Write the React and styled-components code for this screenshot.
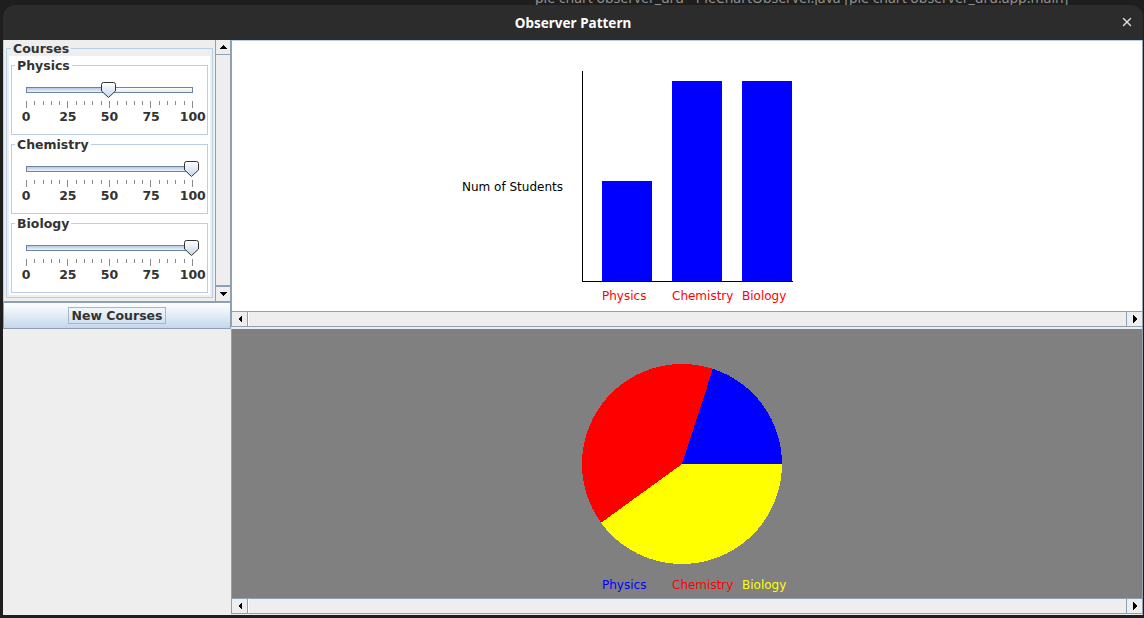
import React from 'react';
import styled, { createGlobalStyle } from 'styled-components';
import { X } from 'lucide-react';

const GlobalStyle = createGlobalStyle`
  html, body {
    margin: 0;
    padding: 0;
    width: 1144px;
    height: 618px;
    overflow: hidden;
    background: #1e1e1e;
  }
`;

const courses = [
  { name: 'Physics', value: 50 },
  { name: 'Chemistry', value: 100 },
  { name: 'Biology', value: 100 },
];

const Screen = styled.div`
  display: flex;
  flex-direction: column;
  width: 1144px;
  height: 618px;
`;

const DesktopStrip = styled.div`
  height: 5px;
  overflow: hidden;
  padding-left: 535px;
  font-family: 'Noto Sans', sans-serif;
  font-size: 14px;
  line-height: 14px;
  color: #8f8f8f;
  white-space: nowrap;
`;

const StripText = styled.div`
  margin-top: -9px;
`;

const Window = styled.div`
  margin-left: 3px;
  width: 1140px;
  height: 610px;
  display: flex;
  flex-direction: column;
  border-radius: 12px 12px 0 0;
  overflow: hidden;
`;

const TitleBar = styled.div`
  height: 35px;
  flex: none;
  background: #2c2c2c;
  display: flex;
  align-items: center;
  justify-content: center;
  position: relative;
  font-family: 'Noto Sans', sans-serif;
  font-weight: 700;
  font-size: 13.5px;
  color: #ffffff;
`;

const CloseButton = styled.div`
  position: absolute;
  right: 9px;
  top: 10px;
  display: flex;
  color: #dddddd;
`;

const Body = styled.div`
  flex: 1;
  display: flex;
  background: #eeeeee;
  font-family: 'DejaVu Sans', 'Liberation Sans', sans-serif;
`;

const LeftPane = styled.div`
  width: 228px;
  flex: none;
  display: flex;
  flex-direction: column;
`;

const CourseScroll = styled.div`
  height: 261px;
  display: flex;
  border-left: 1px solid #b8cfe5;
  border-bottom: 1px solid #8da0b4;
`;

const Viewport = styled.div`
  flex: 1;
  overflow: hidden;
  padding-top: 1px;
`;

const TitledBox = styled.fieldset`
  margin: 0 2px;
  padding: 0 2px 2px;
  border: 1px solid #b8cfe5;
  min-width: 0;
`;

const BoxTitle = styled.legend`
  margin-left: ${p => p.$indent}px;
  padding: 0 2px;
  font-weight: 700;
  font-size: 12.5px;
  line-height: 15px;
  color: #333333;
`;

const CourseList = styled.div`
  background: #ffffff;
  padding: 2px 2px 2px;
  display: flex;
  flex-direction: column;
  gap: 2px;
`;

const CourseBox = styled(TitledBox)`
  margin: 0;
  padding: 0 14px 10px;
`;

const SliderBody = styled.div`
  margin-top: 9px;
  height: 16px;
  position: relative;
  display: flex;
  align-items: center;
`;

const Track = styled.div`
  flex: 1;
  height: 6px;
  box-sizing: border-box;
  border: 1px solid #6e84a3;
  background: linear-gradient(#fbfcfd, #e3ebf3);
  display: flex;
`;

const TrackFill = styled.div`
  height: 100%;
  background: linear-gradient(#b5c9e2, #eef3f9);
`;

const Thumb = styled.svg`
  position: absolute;
  top: 0;
`;

const Ticks = styled.div`
  margin-top: 3px;
  height: 7px;
  display: flex;
  justify-content: space-between;
  align-items: flex-start;
`;

const Tick = styled.span`
  width: 1px;
  height: ${p => (p.$major ? 7 : 4)}px;
  background: #8a8a8a;
`;

const TickLabels = styled.div`
  margin: 2px -20.6px 0;
  display: grid;
  grid-template-columns: repeat(5, 1fr);
  font-weight: 700;
  font-size: 12.5px;
  line-height: 14px;
  color: #333333;
  text-align: center;
`;

const VScroll = styled.div`
  width: 16px;
  flex: none;
  box-sizing: border-box;
  display: flex;
  flex-direction: column;
  border-left: 1px solid #8da0b4;
  border-right: 1px solid #8da0b4;
  background: #eeeeee;
`;

const ArrowButton = styled.div`
  flex: none;
  width: ${p => (p.$vertical ? 'auto' : '16px')};
  height: ${p => (p.$vertical ? '15px' : 'auto')};
  display: flex;
  align-items: center;
  justify-content: center;
  background: #eeeeee;
  box-sizing: border-box;
  ${p => p.$side}: 1px solid #8da0b4;
`;

const VThumb = styled.div`
  flex: 1;
  border-bottom: 1px solid #8da0b4;
  background: #eeeeee;
`;

const NewCoursesButton = styled.button`
  height: 27px;
  flex: none;
  margin: 0;
  padding: 0;
  border: 1px solid #8da0b4;
  background: linear-gradient(#fdfeff, #e2ecf5 50%, #c4d7ea);
  display: flex;
  align-items: center;
  justify-content: center;
  font-family: 'DejaVu Sans', 'Liberation Sans', sans-serif;
  font-weight: 700;
  font-size: 12.5px;
  color: #333333;
`;

const FocusRing = styled.span`
  border: 1px solid #a3b8cc;
  padding: 0 2px;
  line-height: 15px;
`;

const RightPane = styled.div`
  flex: 1;
  display: flex;
  flex-direction: column;
  gap: 2px;
  border-right: 1px solid #8da0b4;
  border-bottom: 1px solid #eeeeee;
`;

const ScrollPane = styled.div`
  display: flex;
  flex-direction: column;
  border-left: 1px solid #8da0b4;
  border-top: ${p => (p.$top ? '1px solid #b8cfe5' : 'none')};
`;

const Canvas = styled.div`
  height: ${p => p.$h}px;
  background: ${p => p.$bg};
  display: flex;
`;

const HScroll = styled.div`
  height: 16px;
  flex: none;
  display: flex;
  box-sizing: border-box;
  border-top: 1px solid #8da0b4;
  border-bottom: 1px solid #8da0b4;
  background: #eeeeee;
`;

const HTrack = styled.div`
  flex: 1;
  border-left: 1px solid #ffffff;
`;

const Arrow = ({ dir }) => {
  const pts = {
    up: '0,4 4,0 8,4',
    down: '0,0 8,0 4,4',
    left: '4,0 4,8 0,4',
    right: '0,0 0,8 4,4',
  }[dir];
  const vertical = dir === 'up' || dir === 'down';
  return (
    <svg width={vertical ? 8 : 4} height={vertical ? 4 : 8} viewBox={vertical ? '0 0 8 4' : '0 0 4 8'} shapeRendering="crispEdges">
      <polygon points={pts} fill="#000" />
    </svg>
  );
};

const SliderThumb = ({ value }) => (
  <Thumb width="15" height="16" viewBox="0 0 15 16" style={{ left: value * 1.65 - 7.5 }}>
    <defs>
      <linearGradient id="thumbFill" x1="0" y1="0" x2="0" y2="1">
        <stop offset="0" stopColor="#ffffff" />
        <stop offset="1" stopColor="#c3d6ea" />
      </linearGradient>
    </defs>
    <path d="M2.5,0.5 H12.5 Q14.5,0.5 14.5,2.5 V9 L7.5,15.5 L0.5,9 V2.5 Q0.5,0.5 2.5,0.5 Z" fill="url(#thumbFill)" stroke="#333333" />
  </Thumb>
);

const CourseSlider = ({ name, value }) => (
  <CourseBox>
    <BoxTitle $indent={-11}>{name}</BoxTitle>
    <SliderBody>
      <Track>
        <TrackFill style={{ width: `${value}%` }} />
      </Track>
      <SliderThumb value={value} />
    </SliderBody>
    <Ticks>
      {Array.from({ length: 21 }, (_, i) => (
        <Tick key={i} $major={i % 5 === 0} />
      ))}
    </Ticks>
    <TickLabels>
      {['0', '25', '50', '75', '100'].map(l => (
        <span key={l}>{l}</span>
      ))}
    </TickLabels>
  </CourseBox>
);

const labelX = [370, 440, 510];

const BarChart = () => (
  <svg width="910" height="270" shapeRendering="crispEdges">
    <text x="230" y="150" fontFamily="DejaVu Sans, sans-serif" fontSize="12" fill="#000">Num of Students</text>
    <line x1="350.5" y1="30" x2="350.5" y2="241" stroke="#000" />
    <line x1="350" y1="240.5" x2="561" y2="240.5" stroke="#000" />
    {courses.map((c, i) => (
      <rect key={c.name} x={labelX[i]} y={240 - c.value * 2} width="50" height={c.value * 2} fill="#0000ff" />
    ))}
    {courses.map((c, i) => (
      <text key={c.name} x={labelX[i]} y="259" fontFamily="DejaVu Sans, sans-serif" fontSize="12" fill="#ff0000">{c.name}</text>
    ))}
  </svg>
);

const pieColors = ['#0000ff', '#ff0000', '#ffff00'];

const PieChart = () => {
  const total = courses.reduce((s, c) => s + c.value, 0);
  const cx = 450;
  const cy = 135;
  const r = 100;
  let start = 0;
  const slices = courses.map((c, i) => {
    const sweep = (c.value / total) * 360;
    const a0 = (start * Math.PI) / 180;
    const a1 = ((start + sweep) * Math.PI) / 180;
    const x0 = cx + r * Math.cos(a0);
    const y0 = cy - r * Math.sin(a0);
    const x1 = cx + r * Math.cos(a1);
    const y1 = cy - r * Math.sin(a1);
    start += sweep;
    const large = sweep > 180 ? 1 : 0;
    return (
      <path key={c.name} d={`M${cx},${cy} L${x0},${y0} A${r},${r} 0 ${large} 0 ${x1},${y1} Z`} fill={pieColors[i]} />
    );
  });
  return (
    <svg width="910" height="269" shapeRendering="crispEdges">
      {slices}
      {courses.map((c, i) => (
        <text key={c.name} x={labelX[i]} y="260" fontFamily="DejaVu Sans, sans-serif" fontSize="12" fill={pieColors[i]}>{c.name}</text>
      ))}
    </svg>
  );
};

const HorizontalBar = () => (
  <HScroll>
    <ArrowButton $side="border-right"><Arrow dir="left" /></ArrowButton>
    <HTrack />
    <ArrowButton $side="border-left"><Arrow dir="right" /></ArrowButton>
  </HScroll>
);

export default function App() {
  return (
    <>
      <GlobalStyle />
      <Screen>
        <DesktopStrip>
          <StripText>ple chart observer_uru - PieChartObserver.java [pie chart observer_uru.app.main]</StripText>
        </DesktopStrip>
        <Window>
          <TitleBar>
            Observer Pattern
            <CloseButton><X size={14} strokeWidth={2.5} /></CloseButton>
          </TitleBar>
          <Body>
            <LeftPane>
              <CourseScroll>
                <Viewport>
                  <TitledBox>
                    <BoxTitle $indent={2}>Courses</BoxTitle>
                    <CourseList>
                      {courses.map(c => (
                        <CourseSlider key={c.name} {...c} />
                      ))}
                    </CourseList>
                  </TitledBox>
                </Viewport>
                <VScroll>
                  <ArrowButton $vertical $side="border-bottom"><Arrow dir="up" /></ArrowButton>
                  <VThumb />
                  <ArrowButton $vertical $side="border-top"><Arrow dir="down" /></ArrowButton>
                </VScroll>
              </CourseScroll>
              <NewCoursesButton>
                <FocusRing>New Courses</FocusRing>
              </NewCoursesButton>
            </LeftPane>
            <RightPane>
              <ScrollPane $top>
                <Canvas $h={270} $bg="#ffffff"><BarChart /></Canvas>
                <HorizontalBar />
              </ScrollPane>
              <ScrollPane>
                <Canvas $h={269} $bg="#808080"><PieChart /></Canvas>
                <HorizontalBar />
              </ScrollPane>
            </RightPane>
          </Body>
        </Window>
      </Screen>
    </>
  );
}
